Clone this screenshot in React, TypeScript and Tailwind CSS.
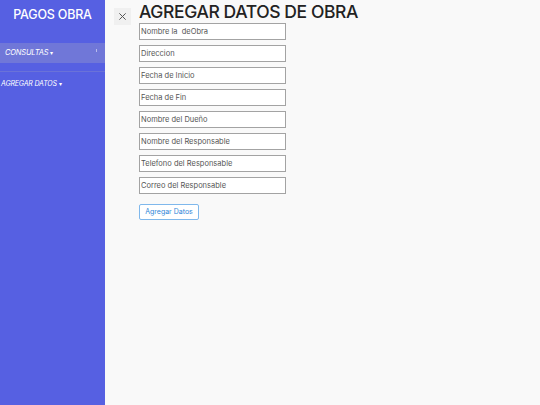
import React from 'react';

const fields = [
  'Nombre la  deObra',
  'Direccion',
  'Fecha de Inicio',
  'Fecha de Fin',
  'Nombre del Dueño',
  'Nombre del Responsable',
  'Telefono del Responsable',
  'Correo del Responsable',
];

export default function App() {
  return (
    <div
      className="flex h-[405px] w-[540px] overflow-hidden bg-[#f9f9f9]"
      style={{ fontFamily: 'Inter, "Noto Sans", sans-serif' }}
    >
      {/* Sidebar */}
      <aside className="flex w-[105px] shrink-0 flex-col bg-[#5660e2] text-white">
        <div className="flex h-[31px] items-center justify-center text-[12.5px] font-medium tracking-[-0.2px]">
          PAGOS OBRA
        </div>
        <div className="mt-[12px] flex h-[20px] items-center justify-between bg-[#7077d8] pl-[5px] pr-[8px]">
          <span className="text-[7.5px] italic tracking-tight">
            CONSULTAS <span className="text-[6px] not-italic">▾</span>
          </span>
          <span className="mb-[6px] h-[3px] w-[1px] bg-white/50" />
        </div>
        <div className="h-[9px] border-b border-[#6a72d8]" />
        <div className="flex h-[24px] items-center pl-[1px]">
          <span className="text-[7px] italic tracking-tight">
            AGREGAR DATOS <span className="text-[6px] not-italic">▾</span>
          </span>
        </div>
      </aside>

      {/* Main */}
      <main className="flex flex-1 items-start">
        <button className="ml-[9px] mt-[8px] flex h-[17px] w-[17px] items-center justify-center bg-[#f0f0f0] text-[#555]">
          <svg width="9" height="9" viewBox="0 0 10 10" fill="none" stroke="currentColor" strokeWidth="1.1">
            <path d="M1.5 1.5l7 7M8.5 1.5l-7 7" />
          </svg>
        </button>
        <div className="ml-[8px] flex flex-col">
          <h1 className="text-[17.5px] font-medium leading-[23px] tracking-[-0.4px] text-[#222]">
            AGREGAR DATOS DE OBRA
          </h1>
          <div className="flex flex-col gap-[5px]">
            {fields.map((f) => (
              <input
                key={f}
                placeholder={f}
                className="h-[17px] w-[147px] border border-[#a3a3a3] bg-white px-[1px] text-[7.5px] text-[#333] placeholder:text-[#555] outline-none"
              />
            ))}
          </div>
          <button className="mt-[10px] h-[16px] w-[60px] rounded-[2px] border border-[#7fb8ec] bg-white text-[7px] text-[#2e86d8]">
            Agregar Datos
          </button>
        </div>
      </main>
    </div>
  );
}
